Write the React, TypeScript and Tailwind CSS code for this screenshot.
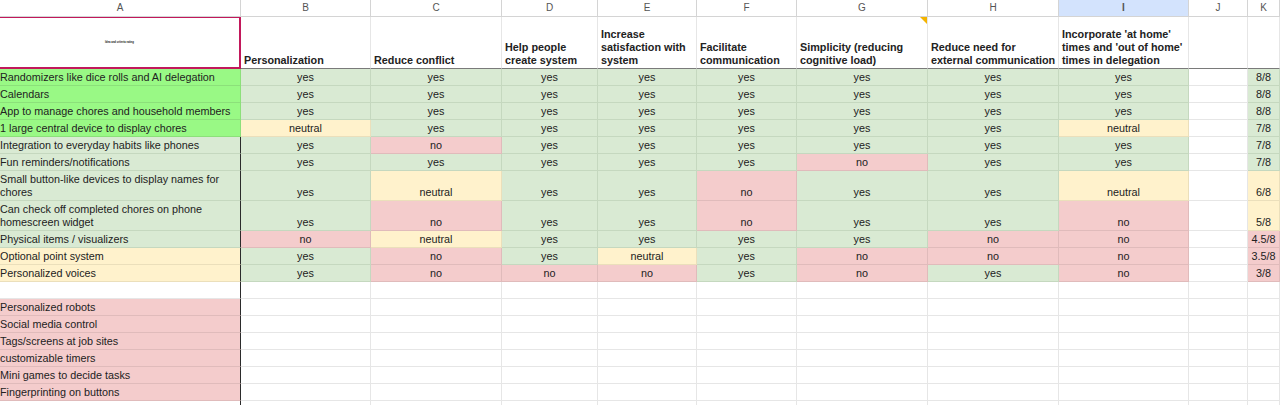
const columns = ["A", "B", "C", "D", "E", "F", "G", "H", "I", "J", "K"];

const headings = [
  "Personalization",
  "Reduce conflict",
  "Help people create system",
  "Increase satisfaction with system",
  "Facilitate communication",
  "Simplicity (reducing cognitive load)",
  "Reduce need for external communication",
  "Incorporate 'at home' times and 'out of home' times in delegation",
];

type Row = { label: string; tone: string; votes: string; score: string; tall?: boolean };

// y = yes, n = no, u = neutral, one letter per column B to I
const rows: Row[] = [
  { label: "Randomizers like dice rolls and AI delegation", tone: "bright", votes: "yyyyyyyy", score: "8/8" },
  { label: "Calendars", tone: "bright", votes: "yyyyyyyy", score: "8/8" },
  { label: "App to manage chores and household members", tone: "bright", votes: "yyyyyyyy", score: "8/8" },
  { label: "1 large central device to display chores", tone: "bright", votes: "uyyyyyyu", score: "7/8" },
  { label: "Integration to everyday habits like phones", tone: "yes", votes: "ynyyyyyy", score: "7/8" },
  { label: "Fun reminders/notifications", tone: "yes", votes: "yyyyynyy", score: "7/8" },
  { label: "Small button-like devices to display names for chores", tone: "yes", votes: "yuyynyyu", score: "6/8", tall: true },
  { label: "Can check off completed chores on phone homescreen widget", tone: "yes", votes: "ynyynyyn", score: "5/8", tall: true },
  { label: "Physical items / visualizers", tone: "yes", votes: "nuyyyynn", score: "4.5/8" },
  { label: "Optional point system", tone: "neutral", votes: "ynyuynnn", score: "3.5/8" },
  { label: "Personalized voices", tone: "neutral", votes: "ynnnynyn", score: "3/8" },
];

const rejected = [
  "Personalized robots",
  "Social media control",
  "Tags/screens at job sites",
  "customizable timers",
  "Mini games to decide tasks",
  "Fingerprinting on buttons",
];

const toneClass: Record<string, string> = {
  bright: "bg-[#99f985] border-[#8ce07a]",
  yes: "bg-[#d9ead3] border-[#c5d8bf]",
  neutral: "bg-[#fff2cc] border-[#ebdfbb]",
  no: "bg-[#f4cccc] border-[#e0bbbb]",
  blank: "bg-white border-[#e6e6e6]",
};

const voteInfo: Record<string, { text: string; tone: string }> = {
  y: { text: "yes", tone: "yes" },
  n: { text: "no", tone: "no" },
  u: { text: "neutral", tone: "neutral" },
};

function scoreTone(score: string) {
  const n = parseFloat(score);
  if (n >= 7) return "yes";
  if (n >= 5) return "neutral";
  return "no";
}

function Cell({ tone, center, children, leftEdge }: { tone: string; center?: boolean; children?: React.ReactNode; leftEdge?: boolean }) {
  return (
    <div
      className={`flex items-end overflow-hidden border-r border-b pb-[1px] leading-[13px] whitespace-nowrap ${toneClass[tone]} ${center ? "justify-center" : ""} ${leftEdge ? "border-r-[#2b2b2b]" : ""}`}
    >
      {children}
    </div>
  );
}

function EmptyRow({ label }: { label?: string }) {
  return (
    <>
      <Cell tone={label ? "no" : "blank"} leftEdge>
        {label}
      </Cell>
      {columns.slice(1).map((c) => (
        <Cell key={c} tone="blank" />
      ))}
    </>
  );
}

export default function App() {
  return (
    <div className="h-[405px] w-[1280px] overflow-hidden bg-white font-['Liberation_Sans',Arial,sans-serif] text-[10.8px] text-[#222]">
      <div className="grid grid-cols-[241px_130px_131px_96px_99px_100px_131px_131px_130px_59px_32px] grid-rows-[17px_52px_repeat(6,17px)_30px_30px_repeat(11,17px)]">
        {columns.map((c) => (
          <div
            key={c}
            className={`flex items-center justify-center border-r border-b border-[#d4d4d4] pb-[1px] text-[10px] text-[#555] ${c === "I" ? "bg-[#d3e3fd] font-semibold text-[#0b2a5c]" : "bg-white"}`}
          >
            {c}
          </div>
        ))}

        <div className="flex items-center justify-center border-t-[1px] border-r-2 border-b-2 border-[#c2185b] bg-white">
          <span className="text-[2.7px] leading-[2px] font-bold text-[#111]">Idea and criteria rating</span>
        </div>
        {headings.map((h, i) => (
          <div
            key={h}
            className="relative flex items-end border-r border-b border-r-[#e6e6e6] border-b-[#7a7a7a] pb-[1px] pl-[3px] pr-[1px] leading-[13px] font-bold"
          >
            {i === 5 && (
              <span className="absolute top-0 right-0 h-0 w-0 border-t-[7px] border-l-[7px] border-t-[#f4b400] border-l-transparent" />
            )}
            <span>{h}</span>
          </div>
        ))}
        <div className="border-r border-b border-r-[#e6e6e6] border-b-[#7a7a7a]" />
        <div className="border-r border-b border-r-[#e6e6e6] border-b-[#7a7a7a]" />

        {rows.map((row) => (
          <div key={row.label} className="contents">
            <Cell tone={row.tone} leftEdge={row.tone !== "bright"}>
              <span className={row.tall ? "w-[236px] whitespace-normal" : ""}>{row.label}</span>
            </Cell>
            {row.votes.split("").map((v, i) => (
              <Cell key={i} tone={voteInfo[v].tone} center>
                {voteInfo[v].text}
              </Cell>
            ))}
            <Cell tone="blank" />
            <Cell tone={scoreTone(row.score)} center>
              {row.score}
            </Cell>
          </div>
        ))}

        <EmptyRow />
        {rejected.map((label) => (
          <EmptyRow key={label} label={label} />
        ))}
        <EmptyRow />
      </div>
    </div>
  );
}
